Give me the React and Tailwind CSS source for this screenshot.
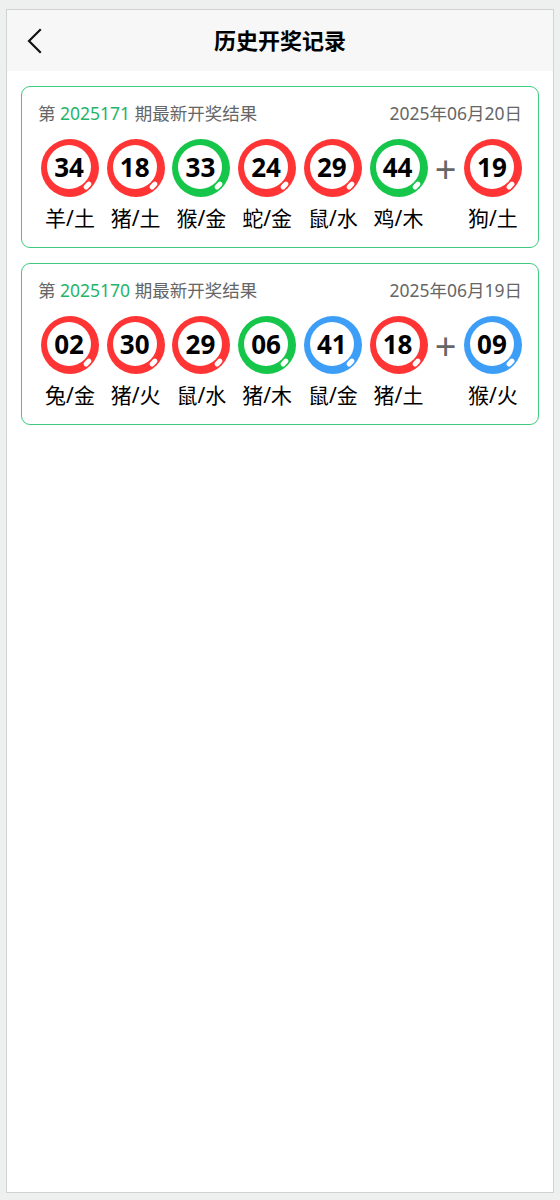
const FONT = { fontFamily: '"Noto Sans", "Noto Sans CJK SC", sans-serif' };

const draws = [
  {
    issue: "2025171",
    date: "2025年06月20日",
    balls: [
      { n: "34", c: "red", z: "羊/土" },
      { n: "18", c: "red", z: "猪/土" },
      { n: "33", c: "green", z: "猴/金" },
      { n: "24", c: "red", z: "蛇/金" },
      { n: "29", c: "red", z: "鼠/水" },
      { n: "44", c: "green", z: "鸡/木" },
    ],
    special: { n: "19", c: "red", z: "狗/土" },
  },
  {
    issue: "2025170",
    date: "2025年06月19日",
    balls: [
      { n: "02", c: "red", z: "兔/金" },
      { n: "30", c: "red", z: "猪/火" },
      { n: "29", c: "red", z: "鼠/水" },
      { n: "06", c: "green", z: "猪/木" },
      { n: "41", c: "blue", z: "鼠/金" },
      { n: "18", c: "red", z: "猪/土" },
    ],
    special: { n: "09", c: "blue", z: "猴/火" },
  },
];

const ringColors = {
  red: "bg-[#ff3434]",
  green: "bg-[#16c64a]",
  blue: "bg-[#3d9ef8]",
};

function Ball({ ball }) {
  return (
    <div className="flex flex-col items-center w-[58px]">
      <div className={`relative w-[58px] h-[58px] rounded-full ${ringColors[ball.c]}`}>
        <div className="ml-[6px] mt-[6px] w-[44px] h-[44px] rounded-full bg-white flex items-center justify-center">
          <span className="text-[26px] font-bold text-black leading-none">{ball.n}</span>
        </div>
        {/* glossy highlight */}
        <span className="absolute right-[7px] bottom-[9px] w-[9px] h-[5px] rounded-full bg-white -rotate-45" />
      </div>
      <span className="mt-[7px] text-[21px] leading-[28px] text-black whitespace-nowrap">{ball.z}</span>
    </div>
  );
}

function DrawCard({ draw }) {
  return (
    <div className="border border-[#3ccb7f] rounded-[9px] px-[16px] pt-[14px] pb-[15px]">
      <div className="flex items-center justify-between text-[17.5px] leading-[25px] text-[#666]">
        <span>
          第 <span className="text-[#1fb46a]">{draw.issue}</span> 期最新开奖结果
        </span>
        <span>{draw.date}</span>
      </div>
      <div className="mt-[13px] flex items-start justify-between pl-[3px] pr-0">
        {draw.balls.map((b, i) => (
          <Ball key={i} ball={b} />
        ))}
        <div className="h-[58px] w-[21px] flex items-center justify-center text-[38px] font-normal text-[#666] leading-none">
          +
        </div>
        <Ball ball={draw.special} />
      </div>
    </div>
  );
}

export default function App() {
  return (
    <div className="min-h-[1200px] bg-[#eef0f0] px-[6px] pt-[9px] pb-[7px] flex" style={FONT}>
      <div className="flex-1 flex flex-col border border-[#d2d2d2] bg-white">
        {/* header */}
        <div className="h-[61px] bg-[#f7f7f7] flex items-center relative">
          <svg className="ml-[19px]" width="16" height="26" viewBox="0 0 16 26" fill="none">
            <path d="M14 2 L3 13 L14 24" stroke="#111" strokeWidth="2.2" strokeLinecap="square" />
          </svg>
          <h1 className="absolute left-0 right-0 text-center text-[22px] font-bold text-black pointer-events-none">
            历史开奖记录
          </h1>
        </div>

        {/* records */}
        <div className="px-[14px] pt-[15px] flex flex-col gap-[15px]">
          {draws.map((d) => (
            <DrawCard key={d.issue} draw={d} />
          ))}
        </div>
      </div>
    </div>
  );
}
